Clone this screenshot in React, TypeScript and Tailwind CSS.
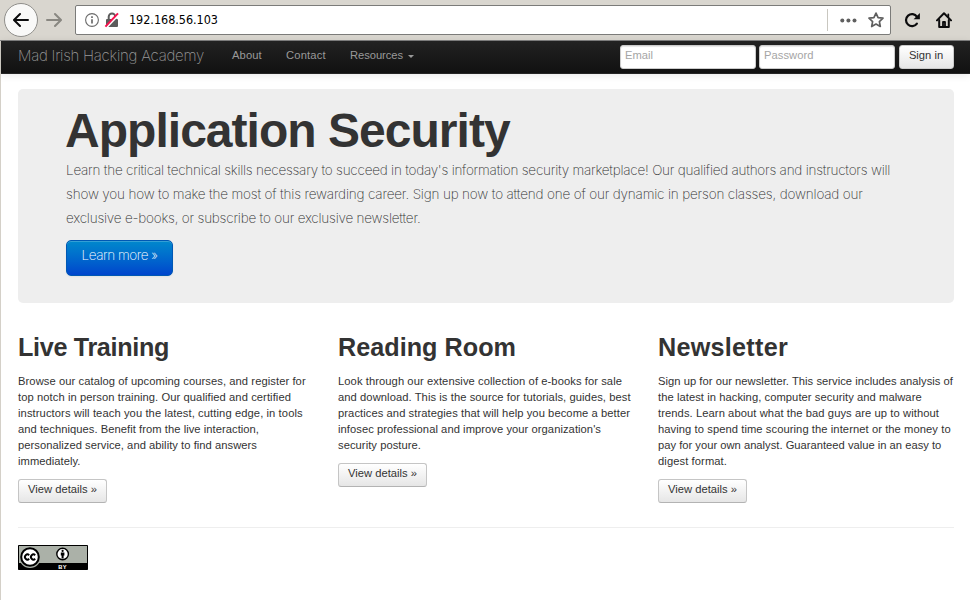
import type { ReactNode } from "react";

type Line = [text: string, tracking: string];

function Lines({ lines }: { lines: Line[] }) {
  return (
    <>
      {lines.map(([text, tracking]) => (
        <span key={text} className={`block whitespace-nowrap ${tracking}`}>
          {text}{" "}
        </span>
      ))}
    </>
  );
}

function BrowserBar() {
  return (
    <header className="flex h-[41px] items-center border-b border-[#808080] bg-[#d9d6cf] pl-1">
      <button className="flex size-[34px] shrink-0 items-center justify-center rounded-full border border-[#8f8e8a] bg-[#f9f9f8]">
        <svg width="16" height="16" viewBox="0 0 16 16" fill="none" stroke="#0c0c0d" strokeWidth="2" strokeLinecap="round" strokeLinejoin="round">
          <path d="M15 8H1.5M7 2L1 8l6 6" />
        </svg>
      </button>
      <svg className="ml-2 shrink-0" width="16" height="16" viewBox="0 0 16 16" fill="none" stroke="#898781" strokeWidth="2" strokeLinecap="round" strokeLinejoin="round">
        <path d="M1 8h13.5M9 2l6 6-6 6" />
      </svg>
      <div className="ml-[13px] flex h-[30px] w-[816px] shrink-0 items-center rounded-[2px] border border-[#7b7b79] bg-white">
        <svg className="ml-[9px]" width="14" height="14" viewBox="0 0 14 14" fill="none" stroke="#6b6b6b">
          <circle cx="7" cy="7" r="6.4" strokeWidth="1.1" />
          <path d="M7 6.2v4.3M7 3.3v1.6" strokeWidth="1.7" />
        </svg>
        <svg className="ml-[5px]" width="16" height="16" viewBox="0 0 16 16" fill="none">
          <path d="M4.7 8V4.8a3.3 3.3 0 0 1 6.6 0V8" stroke="#5c5c5c" strokeWidth="2" />
          <rect x="2" y="7" width="12" height="8" rx="1" fill="#5c5c5c" />
          <path d="M2.4 15.6L15 2.4" stroke="#fff" strokeWidth="2" />
          <path d="M1.4 14.6L14 1.4" stroke="#f5134f" strokeWidth="2" />
        </svg>
        <span className="mt-px ml-[9px] font-['DejaVu_Sans_Condensed','DejaVu_Sans',sans-serif] text-[12.5px] leading-none tracking-[-0.03px] text-black">
          192.168.56.103
        </span>
        <span className="ml-auto h-[22px] w-px bg-[#c9c7c0]" />
        <svg className="ml-3" width="17" height="5" viewBox="0 0 17 5" fill="#5f5f5f">
          <circle cx="2.3" cy="2.5" r="2" />
          <circle cx="8.4" cy="2.5" r="2" />
          <circle cx="14.5" cy="2.5" r="2" />
        </svg>
        <svg className="mr-[6px] ml-[11px]" width="16" height="16" viewBox="0 0 16 16" fill="none" stroke="#5f5f5f" strokeWidth="1.7" strokeLinejoin="round">
          <path d="M8 1.1l2.1 4.5 4.9.6-3.6 3.4.9 4.9L8 12.1l-4.3 2.4.9-4.9L1 6.2l4.9-.6z" />
        </svg>
      </div>
      <svg className="ml-[13px] shrink-0" width="17" height="16" viewBox="0 0 17 16" fill="none" stroke="#0c0c0d" strokeWidth="2.2">
        <path d="M12.9 11.6A6 6 0 1 1 13 4.8" strokeLinecap="round" />
        <path d="M15.9 1v6.2H9.6z" fill="#0c0c0d" stroke="none" />
      </svg>
      <svg className="ml-[15px] shrink-0" width="16" height="16" viewBox="0 0 16 16" fill="none" stroke="#0c0c0d" strokeWidth="2" strokeLinecap="round" strokeLinejoin="round">
        <path d="M1 8.4L8 1.3l7 7.1" />
        <path d="M3.2 8v7h9.6V8" />
        <path d="M7 14.5V10h2v4.5M12.3 2.5v2" strokeWidth="1.8" />
      </svg>
    </header>
  );
}

function Field({ label, tracking }: { label: string; tracking: string }) {
  return (
    <input
      placeholder={label}
      className={`h-[24px] w-[136px] rounded-[3px] border border-[#ccc] bg-white px-1 pb-[4px] text-[11.2px] leading-4 shadow-[inset_0_1px_1px_rgba(0,0,0,0.1)] outline-none placeholder:text-[#a5a5a5] ${tracking}`}
    />
  );
}

function NavBar() {
  return (
    <nav className="flex h-[33px] items-start border-b border-[#252525] bg-linear-to-b from-[#222] to-[#111] pl-[17px] text-[11.2px] leading-4 text-[#999] shadow-[0_1px_8px_rgba(0,0,0,0.1)]">
      <a className="mt-[5px] w-[190px] font-['Inter',sans-serif] text-[15px] leading-5 font-extralight tracking-[-0.26px] whitespace-nowrap">
        Mad Irish Hacking Academy
      </a>
      <a className="mt-[6px] ml-6 w-[30px] tracking-[0.12px]">About</a>
      <a className="mt-[6px] ml-6 w-[40px] tracking-[0.17px]">Contact</a>
      <a className="mt-[6px] ml-6 flex items-center tracking-[-0.05px]">
        Resources
        <span className="mt-[2px] ml-[5px] border-x-[3px] border-t-[3px] border-x-transparent border-t-[#999]" />
      </a>
      <form className="mt-[4px] mr-4 ml-auto flex gap-[3px]">
        <Field label="Email" tracking="tracking-normal" />
        <Field label="Password" tracking="tracking-[0.04px]" />
        <button
          type="button"
          className="ml-px h-[24px] w-[55px] rounded-[3px] border border-[#ccc] bg-linear-to-b from-white to-[#e6e6e6] pr-px pb-[5px] text-[#333]"
        >
          Sign in
        </button>
      </form>
    </nav>
  );
}

function Hero() {
  return (
    <section className="h-[214px] rounded-[5px] bg-[#eee] px-12 pt-[18px] text-[#333]">
      <h1 className="-ml-px text-[48px] leading-[48px] font-bold tracking-[-0.97px] whitespace-nowrap">Application Security</h1>
      <p className="mt-[3px] font-['Inter',sans-serif] text-[13.5px] leading-6 font-extralight">
        <Lines
          lines={[
            ["Learn the critical technical skills necessary to succeed in today's information security marketplace! Our qualified authors and instructors will", "tracking-[-0.228px]"],
            ["show you how to make the most of this rewarding career. Sign up now to attend one of our dynamic in person classes, download our", "tracking-[-0.17px]"],
            ["exclusive e-books, or subscribe to our exclusive newsletter.", "tracking-[-0.21px]"],
          ]}
        />
      </p>
      <button className="mt-[10px] h-[36px] w-[107px] rounded-[5px] border border-[#0058b4] bg-linear-to-b from-[#0088cc] to-[#0044cc] pb-[7px] font-['Inter',sans-serif] text-[13.5px] leading-6 font-extralight tracking-[-0.46px] whitespace-nowrap text-white shadow-[inset_0_1px_0_rgba(255,255,255,0.2),0_1px_2px_rgba(0,0,0,0.05)]">
        Learn more »
      </button>
    </section>
  );
}

function Column({ title, lines }: { title: ReactNode; lines: Line[] }) {
  return (
    <article className="w-[296px] text-[#333]">
      {title}
      <p className="mt-[10px] text-[11.2px] leading-4">
        <Lines lines={lines} />
      </p>
      <button className="mt-[10px] block h-[24px] w-[89px] rounded-[3px] border border-[#c5c5c5] border-b-[#b3b3b3] bg-linear-to-b from-white to-[#e6e6e6] pb-[5px] text-[11.2px] leading-4 whitespace-nowrap">
        View details »
      </button>
    </article>
  );
}

function CreativeCommonsBadge() {
  return (
    <svg width="70" height="25" viewBox="0 0 70 25" className="mt-[17px] block">
      <rect width="70" height="25" rx="0.8" fill="#000" />
      <rect x="1" y="1" width="68" height="17" fill="#abb1a8" />
      <circle cx="12" cy="12" r="11" fill="#abb1a8" />
      <circle cx="12" cy="12" r="8.8" fill="#fff" stroke="#000" strokeWidth="2" />
      <g fill="none" stroke="#000" strokeWidth="1.9">
        <path d="M11.2 10.2a2.5 2.5 0 1 0 0 3.6" />
        <path d="M17.2 10.2a2.5 2.5 0 1 0 0 3.6" />
      </g>
      <circle cx="44.6" cy="9" r="5.8" fill="#fff" stroke="#000" strokeWidth="1.4" />
      <circle cx="44.6" cy="5.9" r="1.1" />
      <path d="M42.8 7.4h3.6v3.2h-.8v3h-2v-3h-.8z" />
      <text x="44.6" y="23.6" textAnchor="middle" fill="#fff" fontFamily="Liberation Sans, sans-serif" fontWeight="700" fontSize="5.8" letterSpacing="0.3">
        BY
      </text>
    </svg>
  );
}

export default function App() {
  return (
    <div className="h-[600px] w-[970px] overflow-hidden bg-white font-['Liberation_Sans',Arial,sans-serif]">
      <BrowserBar />
      <div className="h-[559px] border-l border-[#d4d0c8]">
        <NavBar />
        <main className="mt-[15px] mr-4 ml-[17px]">
          <Hero />
          <div className="mt-7 flex gap-6">
            <Column
              title={<h2 className="text-[25.2px] leading-8 font-bold tracking-[-0.335px]">Live Training</h2>}
              lines={[
                ["Browse our catalog of upcoming courses, and register for", "tracking-[0.074px]"],
                ["top notch in person training. Our qualified and certified", "tracking-[0.076px]"],
                ["instructors will teach you the latest, cutting edge, in tools", "tracking-[0.09px]"],
                ["and techniques. Benefit from the live interaction,", "tracking-[0.044px]"],
                ["personalized service, and ability to find answers", "tracking-[0.042px]"],
                ["immediately.", "tracking-[0.044px]"],
              ]}
            />
            <Column
              title={<h2 className="text-[25.2px] leading-8 font-bold tracking-[0.023px]">Reading Room</h2>}
              lines={[
                ["Look through our extensive collection of e-books for sale", "tracking-[0.073px]"],
                ["and download. This is the source for tutorials, guides, best", "tracking-[0.072px]"],
                ["practices and strategies that will help you become a better", "tracking-[0.069px]"],
                ["infosec professional and improve your organization's", "tracking-[0.053px]"],
                ["security posture.", "tracking-[0.054px]"],
              ]}
            />
            <Column
              title={<h2 className="text-[25.2px] leading-8 font-bold tracking-[0.261px]">Newsletter</h2>}
              lines={[
                ["Sign up for our newsletter. This service includes analysis of", "tracking-[0.038px]"],
                ["the latest in hacking, computer security and malware", "tracking-[0.061px]"],
                ["trends. Learn about what the bad guys are up to without", "tracking-[0.077px]"],
                ["having to spend time scouring the internet or the money to", "tracking-[0.071px]"],
                ["pay for your own analyst. Guaranteed value in an easy to", "tracking-[0.006px]"],
                ["digest format.", "tracking-[0.087px]"],
              ]}
            />
          </div>
          <hr className="mt-6 border-t border-[#eee]" />
          <CreativeCommonsBadge />
        </main>
      </div>
    </div>
  );
}
